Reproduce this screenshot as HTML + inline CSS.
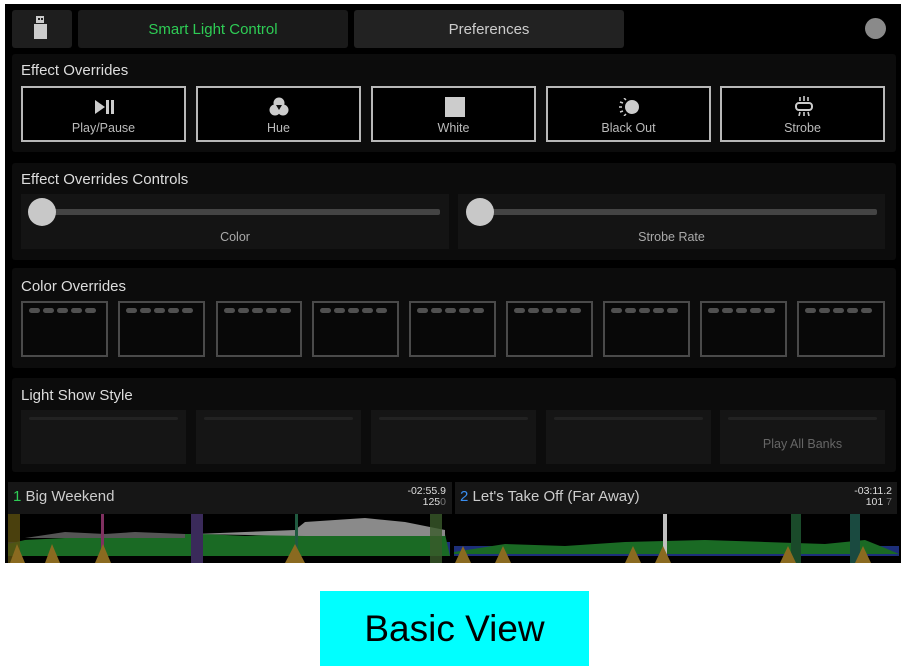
<!DOCTYPE html>
<html><head><style>
*{margin:0;padding:0;box-sizing:border-box}
body{width:906px;height:671px;background:#fff;position:relative;overflow:hidden;font-family:"Liberation Sans",sans-serif}
.a{position:absolute}
#scr{left:5px;top:4px;width:896px;height:559px;background:#000}
.panel{background:#0c0c0c;border-radius:3px}
.t{color:#ddd;font-size:15px}
.eb{border:2px solid #b8b8b8;background:#000;color:#bbb;font-size:12.5px;text-align:center}
.eb span{position:absolute;left:0;right:0;top:33px}
.cb{border:2px solid #4a4a4a;background:#080808}
.dots{position:absolute;left:6px;top:5px;display:flex;gap:3px}
.dots i{width:11px;height:5px;border-radius:3px;background:#505050;display:block}
.lb{background:#151515}
.lb i{position:absolute;left:8px;right:8px;top:7px;height:3px;background:#222;border-radius:2px}
</style></head><body>
<div class="a" id="scr"></div>
<div class="a" style="left:12px;top:10px;width:60px;height:38px;background:#1e1e1e;border-radius:3px"></div>
<div class="a" style="left:36px;top:16px;width:8px;height:7px;background:#ccc"></div>
<div class="a" style="left:38px;top:18px;width:1.5px;height:2px;background:#222"></div>
<div class="a" style="left:41px;top:18px;width:1.5px;height:2px;background:#222"></div>
<div class="a" style="left:34px;top:24px;width:13px;height:15px;background:#ccc"></div>
<div class="a" style="left:78px;top:10px;width:270px;height:38px;background:#1a1a1a;border-radius:3px;color:#2ecc55;font-size:15px;text-align:center;line-height:40px">Smart Light Control</div>
<div class="a" style="left:354px;top:10px;width:270px;height:38px;background:#222;border-radius:3px;color:#ccc;font-size:15px;text-align:center;line-height:40px">Preferences</div>
<div class="a" style="left:865px;top:18px;width:21px;height:21px;border-radius:50%;background:#8a8a8a"></div>
<div class="a panel" style="left:12px;top:54px;width:884px;height:98px"></div>
<div class="a t" style="left:21px;top:62px">Effect Overrides</div>
<div class="a eb" style="left:21px;top:86px;width:165px;height:56px"><span>Play/Pause</span>
<svg class="a" style="left:71px;top:11px" width="22" height="16"><path d="M1 1 L11 8 L1 15Z" fill="#ccc"/><rect x="12" y="1" width="3" height="14" fill="#ccc"/><rect x="17" y="1" width="3" height="14" fill="#ccc"/></svg></div>
<div class="a eb" style="left:196px;top:86px;width:165px;height:56px"><span>Hue</span>
<svg class="a" style="left:71px;top:9px" width="20" height="20"><circle cx="10" cy="6" r="5.5" fill="#ccc"/><circle cx="6" cy="13" r="5.5" fill="#ccc"/><circle cx="14" cy="13" r="5.5" fill="#ccc"/><path d="M7 8 L13 8 L10 13Z" fill="#111"/></svg></div>
<div class="a eb" style="left:371px;top:86px;width:165px;height:56px"><span>White</span>
<div class="a" style="left:72px;top:9px;width:20px;height:20px;background:#ccc"></div></div>
<div class="a eb" style="left:546px;top:86px;width:165px;height:56px"><span>Black Out</span>
<svg class="a" style="left:70px;top:10px" width="24" height="18"><circle cx="14" cy="9" r="7" fill="#ccc"/><path d="M8 2 L6 0 M5 5 L2 4 M4 9 L1 9 M5 13 L2 14 M8 16 L6 18" stroke="#ccc" stroke-width="1.5"/></svg></div>
<div class="a eb" style="left:720px;top:86px;width:165px;height:56px"><span>Strobe</span>
<svg class="a" style="left:72px;top:8px" width="20" height="20"><rect x="2" y="7" width="16" height="7" rx="3" fill="none" stroke="#ccc" stroke-width="2"/><path d="M6 1 L6 5 M10 0 L10 5 M14 1 L14 5 M6 16 L5 20 M10 16 L10 20 M14 16 L15 20" stroke="#ccc" stroke-width="1.6"/></svg></div>
<div class="a panel" style="left:12px;top:163px;width:884px;height:97px"></div>
<div class="a t" style="left:21px;top:171px">Effect Overrides Controls</div>
<div class="a" style="left:21px;top:194px;width:428px;height:55px;background:#141414"></div>
<div class="a" style="left:40px;top:209px;width:400px;height:6px;background:#444;border-radius:2px"></div>
<div class="a" style="left:28px;top:198px;width:28px;height:28px;border-radius:50%;background:#c8c8c8"></div>
<div class="a" style="left:21px;top:230px;width:428px;text-align:center;color:#aaa;font-size:12.5px">Color</div>
<div class="a" style="left:458px;top:194px;width:427px;height:55px;background:#141414"></div>
<div class="a" style="left:477px;top:209px;width:400px;height:6px;background:#444;border-radius:2px"></div>
<div class="a" style="left:466px;top:198px;width:28px;height:28px;border-radius:50%;background:#c8c8c8"></div>
<div class="a" style="left:458px;top:230px;width:427px;text-align:center;color:#aaa;font-size:12.5px">Strobe Rate</div>
<div class="a panel" style="left:12px;top:268px;width:884px;height:100px"></div>
<div class="a t" style="left:21px;top:278px">Color Overrides</div>
<div class="a cb" style="left:21px;top:301px;width:87px;height:56px"><div class="dots"><i></i><i></i><i></i><i></i><i></i></div></div>
<div class="a cb" style="left:118px;top:301px;width:87px;height:56px"><div class="dots"><i></i><i></i><i></i><i></i><i></i></div></div>
<div class="a cb" style="left:216px;top:301px;width:86px;height:56px"><div class="dots"><i></i><i></i><i></i><i></i><i></i></div></div>
<div class="a cb" style="left:312px;top:301px;width:87px;height:56px"><div class="dots"><i></i><i></i><i></i><i></i><i></i></div></div>
<div class="a cb" style="left:409px;top:301px;width:87px;height:56px"><div class="dots"><i></i><i></i><i></i><i></i><i></i></div></div>
<div class="a cb" style="left:506px;top:301px;width:87px;height:56px"><div class="dots"><i></i><i></i><i></i><i></i><i></i></div></div>
<div class="a cb" style="left:603px;top:301px;width:87px;height:56px"><div class="dots"><i></i><i></i><i></i><i></i><i></i></div></div>
<div class="a cb" style="left:700px;top:301px;width:87px;height:56px"><div class="dots"><i></i><i></i><i></i><i></i><i></i></div></div>
<div class="a cb" style="left:797px;top:301px;width:88px;height:56px"><div class="dots"><i></i><i></i><i></i><i></i><i></i></div></div>
<div class="a panel" style="left:12px;top:378px;width:884px;height:94px"></div>
<div class="a t" style="left:21px;top:387px">Light Show Style</div>
<div class="a lb" style="left:21px;top:410px;width:165px;height:54px"><i></i></div>
<div class="a lb" style="left:196px;top:410px;width:165px;height:54px"><i></i></div>
<div class="a lb" style="left:371px;top:410px;width:165px;height:54px"><i></i></div>
<div class="a lb" style="left:546px;top:410px;width:165px;height:54px"><i></i></div>
<div class="a lb" style="left:720px;top:410px;width:165px;height:54px"><i></i><div class="a" style="left:0;right:0;top:27px;text-align:center;color:#666;font-size:12.5px">Play All Banks</div></div>
<div class="a" style="left:8px;top:482px;width:444px;height:32px;background:#161616"></div>
<div class="a" style="left:455px;top:482px;width:442px;height:32px;background:#161616"></div>
<div class="a" style="left:13px;top:488px;font-size:15px;color:#ccc"><span style="color:#2ecc55">1</span> Big Weekend</div>
<div class="a" style="left:400px;top:486px;font-size:10.5px;color:#ddd;text-align:right;width:46px;line-height:11px">-02:55.9<br>125<span style="color:#777">0</span></div>
<div class="a" style="left:460px;top:488px;font-size:15px;color:#ccc"><span style="color:#3a8ef0">2</span> Let's Take Off (Far Away)</div>
<div class="a" style="left:846px;top:486px;font-size:10.5px;color:#ddd;text-align:right;width:46px;line-height:11px">-03:11.2<br>101<span style="color:#777"> 7</span></div>
<svg class="a" style="left:5px;top:514px" width="896" height="49">
<rect width="896" height="49" fill="#000"/>
<rect x="3" y="28" width="442" height="14" fill="#1d2f7a"/>
<path d="M3 30 L20 26 L60 24 L100 22 L140 24 L180 20 L200 20 L240 22 L290 20 L330 18 L360 17 L400 18 L440 20 L445 42 L3 42Z" fill="#1a6a24"/>
<path d="M190 20 L240 18 L290 16 L300 8 L330 6 L360 4 L400 8 L440 16 L440 22 L300 22Z" fill="#8a8a8a"/>
<path d="M20 24 L60 18 L100 20 L130 18 L180 20 L180 24 Z" fill="#555"/>
<rect x="449" y="32" width="445" height="10" fill="#1d2f7a"/>
<path d="M449 38 L500 30 L560 32 L620 28 L700 26 L760 28 L820 30 L860 26 L880 34 L894 40 L449 40Z" fill="#1a6a24"/>
<rect x="3" y="0" width="12" height="49" fill="#5c5010" opacity=".8"/>
<rect x="186" y="0" width="12" height="49" fill="#3a2a5a"/>
<rect x="425" y="0" width="12" height="49" fill="#3a5a2a" opacity=".8"/>
<rect x="96" y="0" width="3" height="49" fill="#803060"/>
<rect x="290" y="0" width="3" height="49" fill="#205a40"/>
<rect x="658" y="0" width="4" height="49" fill="#c0c0c0"/>
<rect x="786" y="0" width="10" height="49" fill="#1a4a2a"/>
<rect x="845" y="0" width="10" height="49" fill="#1a4a40"/>
<path d="M5 49 L12 30 L20 49Z M40 49 L47 30 L55 49Z M90 49 L98 30 L106 49Z M280 49 L290 30 L300 49Z M450 49 L458 32 L466 49Z M490 49 L498 32 L506 49Z M620 49 L628 32 L636 49Z M650 49 L658 32 L666 49Z M775 49 L783 32 L791 49Z M850 49 L858 32 L866 49Z" fill="#8a6a20"/>
<rect x="0" y="0" width="3" height="49" fill="#000"/><rect x="446" y="0" width="3" height="49" fill="#000"/>
</svg>
<div class="a" style="left:320px;top:591px;width:269px;height:75px;background:#00ffff;color:#000;font-size:37px;text-align:center;line-height:75px">Basic View</div>
</body></html>
